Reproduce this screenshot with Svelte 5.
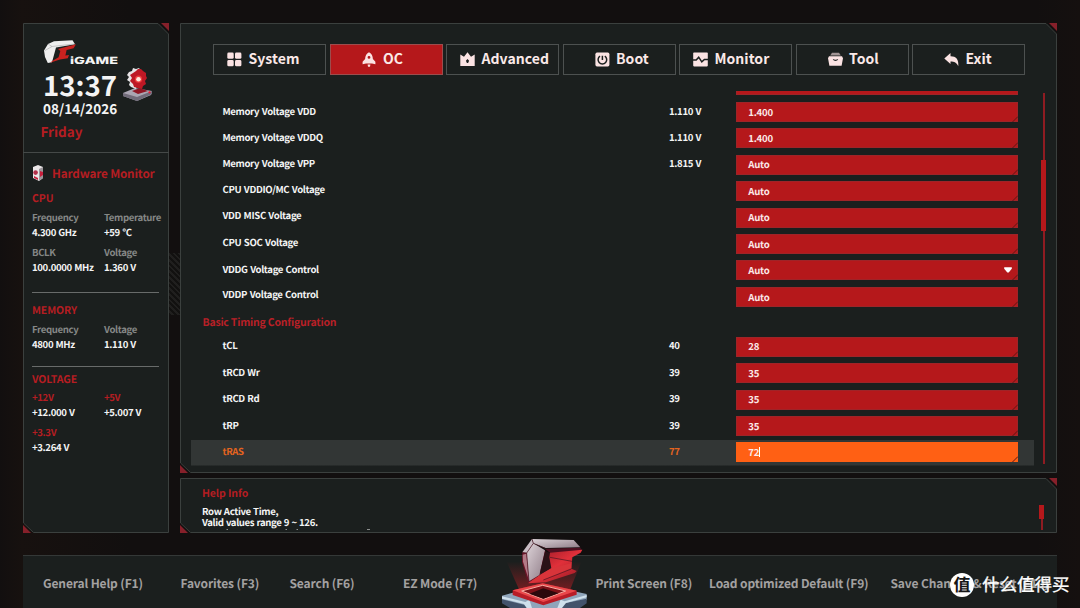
<script lang="ts">
	type Setting = {
		name: string;
		current?: string;
		value: string;
		select?: boolean;
		active?: boolean;
	};

	const tabs = [
		{ id: 'system', label: 'System', wide: true },
		{ id: 'oc', label: 'OC' },
		{ id: 'advanced', label: 'Advanced', wide: true },
		{ id: 'boot', label: 'Boot' },
		{ id: 'monitor', label: 'Monitor', wide: true },
		{ id: 'tool', label: 'Tool' },
		{ id: 'exit', label: 'Exit' },
	];

	let activeTab = $state('oc');

	const monitor = [
		{
			title: 'CPU',
			items: [
				['Frequency', '4.300 GHz'],
				['Temperature', '+59 °C'],
				['BCLK', '100.0000 MHz'],
				['Voltage', '1.360 V'],
			],
		},
		{
			title: 'MEMORY',
			items: [
				['Frequency', '4800 MHz'],
				['Voltage', '1.110 V'],
			],
		},
		{
			title: 'VOLTAGE',
			rails: true,
			items: [
				['+12V', '+12.000 V'],
				['+5V', '+5.007 V'],
				['+3.3V', '+3.264 V'],
			],
		},
	];

	const voltages: Setting[] = [
		{ name: 'Memory Voltage VDD', current: '1.110 V', value: '1.400' },
		{ name: 'Memory Voltage VDDQ', current: '1.110 V', value: '1.400' },
		{ name: 'Memory Voltage VPP', current: '1.815 V', value: 'Auto' },
		{ name: 'CPU VDDIO/MC Voltage', value: 'Auto' },
		{ name: 'VDD MISC Voltage', value: 'Auto' },
		{ name: 'CPU SOC Voltage', value: 'Auto' },
		{ name: 'VDDG Voltage Control', value: 'Auto', select: true },
		{ name: 'VDDP Voltage Control', value: 'Auto' },
	];

	const timings: Setting[] = [
		{ name: 'tCL', current: '40', value: '28' },
		{ name: 'tRCD Wr', current: '39', value: '35' },
		{ name: 'tRCD Rd', current: '39', value: '35' },
		{ name: 'tRP', current: '39', value: '35' },
		{ name: 'tRAS', current: '77', value: '72', active: true },
	];

	const shortcuts = [
		'General Help (F1)',
		'Favorites (F3)',
		'Search (F6)',
		'EZ Mode (F7)',
		'Print Screen (F8)',
		'Load optimized Default (F9)',
		'Save Changes & Reset (F10)',
	];
</script>

{#snippet frame(w: number, h: number)}
	<svg class="frame" viewBox="0 0 {w} {h}" width={w} height={h} aria-hidden="true">
		<path class="plate" d="M.5 .5H{w - 11}L{w - .5} 11V{h - .5}H10.5L.5 {h - 10}Z" />
		<path class="corner" d="M{w - 8} 0H{w}V8ZM0 {h - 8}V{h}H8Z" />
	</svg>
{/snippet}

{#snippet tabIcon(id: string)}
	<svg class="tab-icon" viewBox="0 0 15 15" width="15" height="15" aria-hidden="true">
		{#if id === 'system'}
			<rect x=".3" y=".5" width="6.4" height="6.3" rx="1.4" />
			<rect x="8" y=".5" width="6.4" height="6.3" rx="1.4" />
			<rect x=".3" y="8" width="6.4" height="6.3" rx="1.4" />
			<rect x="8" y="8" width="6.4" height="6.3" rx="1.4" />
		{:else if id === 'oc'}
			<path fill-rule="evenodd" d="M7 .2C9.8 1.8 10.8 4 10.9 7L13.4 9.7V12.3L10 11.6H4L.6 12.3V9.7L3.1 7C3.2 4 4.2 1.8 7 .2ZM7 4A1.4 1.4 0 1 0 7 6.8A1.4 1.4 0 0 0 7 4Z" />
			<path d="M5.6 12.4H8.4L8 14.4L7 15L6 14.4Z" />
		{:else if id === 'advanced'}
			<path fill-rule="evenodd" d="M.3 2.5L4 4.8L7.5 .3L11 4.8L14.7 2.5V14H.3ZM7.5 7L5.9 8.7L6.9 11H8.1L9.1 8.7Z" />
		{:else if id === 'boot'}
			<rect x=".4" y=".6" width="14" height="13.8" rx="1.6" />
			<path class="cut" d="M5 4.1A4.3 4.3 0 1 0 9.8 4.1M7.4 3.7V8" />
		{:else if id === 'monitor'}
			<rect x=".2" y=".6" width="14.6" height="13.8" rx=".8" />
			<path class="cut" d="M0 8H3.2L5.7 5.2L8.8 9.8L11.4 7.4H15" />
		{:else if id === 'tool'}
			<path opacity=".6" d="M4 .8H11L12.8 3.4H2.2Z" />
			<path fill-rule="evenodd" d="M1 4.2H14L15 6.3L13.6 13.7H1.4L0 6.3ZM4.8 7.2C6 9.5 9 9.5 10.2 7.2H9C8.2 8 6.8 8 6 7.2Z" />
		{:else}
			<path d="M.3 6.5L6.5 1V4.2C11.8 4.1 14.9 7 14.3 14.2C12.7 10.7 10.4 9.5 6.5 9.5V12Z" />
		{/if}
	</svg>
{/snippet}

{#snippet settingRow(row: Setting)}
	<div class="row" class:active={row.active} class:plain={!row.current && !row.select}>
		<span class="name">{row.name}</span>
		<span class="current">{row.current ?? ''}</span>
		<div class="field">
			<span class="value">{row.value}</span>
			{#if row.active}<span class="caret"></span>{/if}
			{#if row.select}
				<svg class="arrow" viewBox="0 0 8 6" width="8" height="6" aria-hidden="true">
					<path d="M.2 .3H7.8V1.8L4.7 5.4H3.3L.2 1.8Z" />
				</svg>
			{/if}
			<svg class="notch" viewBox="0 0 6 6" width="6" height="6" aria-hidden="true">
				<path d="M.5 6L6 .5" />
			</svg>
		</div>
	</div>
{/snippet}

<div class="screen">
	<div class="hatch"></div>

	<div class="body">
		<aside class="panel side">
			{@render frame(146, 510)}
			<header class="clock-box">
				<svg class="brand" viewBox="0 0 78 26" width="78" height="26" role="img" aria-label="iGame">
					<path fill="#eee" d="M5 4L11 1.2L29.5 .3L32 4.2L13 7.5L9 22.2L4.8 23L2 17L1 10.5Z" />
					<path fill="#c9221f" d="M15 9L33 4.2L30.6 8.3L23.6 9.9L22.4 15.6L26 15L24.8 18.3L17 19.5L7 22.7L9.6 20.7L15.6 17.2L17.3 11Z" />
					<path fill="none" stroke="#9b9b9b" stroke-width=".5" d="M5 4L9 6.5L2 10.5M9 6.5L31 4" />
					<text x="27" y="24" textLength="48" lengthAdjust="spacingAndGlyphs">iGAME</text>
				</svg>
				<div class="time">
					<span>13:37</span>
					<svg viewBox="0 0 31 34" width="31" height="34" aria-hidden="true">
						<path fill="#aaa5b2" d="M1 25L13 20L30 23L29 27L15 33L1 28Z" />
						<path fill="#716b79" d="M1 25L15 29L30 23V26L15 33L1 28Z" />
						<path fill="#901725" d="M10 23L18 20L26 23L16 26Z" />
						<path fill="#e7e4e6" d="M7 4L10 3L11 0L14 1L17 0L19 3L14 21L9 19L7 17L8 14L5 12L7 9L5 7Z" />
						<path fill="#be1825" d="M11 5L14 3L16 1L19 1L21 3L24 5V8L25 10L23 13L24 16L21 18L20 21L16 20L12 19L11 16L8 13L10 10L8 7Z" />
						<circle cx="16.5" cy="11.2" r="3.6" fill="#ed3b3e" />
						<circle cx="16.5" cy="11.2" r="2.3" fill="#ffe7db" />
						<circle cx="27.5" cy="24.3" r="1.1" fill="#f01832" />
					</svg>
				</div>
				<div class="date">08/14/2026</div>
				<div class="weekday">Friday</div>
			</header>

			<section class="monitor">
				<h2>
					<svg viewBox="0 0 12 18" width="12" height="18" aria-hidden="true">
						<path fill="#ebe7e8" d="M1 3L6 1L11 3V14L7 17L1 14Z" />
						<path fill="#9c969b" d="M7 5L11 3V14L7 17Z" />
						<circle cx="3.6" cy="8.6" r="2.3" fill="#b3304a" />
						<path fill="#c81f3c" d="M8 7L11 8V11L8 13ZM2 12L6 14V16L2 14Z" />
					</svg>
					Hardware Monitor
				</h2>
				{#each monitor as group}
					<div class="group" class:rails={group.rails}>
						<h3>{group.title}</h3>
						<dl>
							{#each group.items as [label, value]}
								<div>
									<dt>{label}</dt>
									<dd>{value}</dd>
								</div>
							{/each}
						</dl>
					</div>
				{/each}
			</section>
		</aside>

		<div class="right">
			<main class="panel main">
				{@render frame(877, 450)}
				<nav class="tabs">
					{#each tabs as tab}
						<button
							class="tab"
							class:selected={activeTab === tab.id}
							class:wide={tab.wide}
							onclick={() => (activeTab = tab.id)}
						>
							{@render tabIcon(tab.id)}
							<span>{tab.label}</span>
						</button>
					{/each}
				</nav>

				<div class="content">
					<div class="list">
						<div class="row scrolled"><div class="field"></div></div>
						{#each voltages as row}
							{@render settingRow(row)}
						{/each}
						<h2 class="section-title">Basic Timing Configuration</h2>
						{#each timings as row}
							{@render settingRow(row)}
						{/each}
					</div>
					<div class="scrollbar"><div class="thumb"></div></div>
				</div>
			</main>

			<section class="panel help">
				{@render frame(877, 55)}
				<div class="help-text">
					<h2>Help Info</h2>
					<p>Row Active Time,<br />Valid values range 9 ~ 126.</p>
					<!-- tops of the next line, cut off by the panel edge -->
					<svg class="cut-line" viewBox="0 0 170 2" width="170" height="2" aria-hidden="true">
						<path d="M24.5 .5H26M83.5 .5H85M94.5 .5H96M165 .5H168" />
					</svg>
				</div>
				<div class="scrollbar"><div class="thumb"></div></div>
			</section>
		</div>
	</div>

	<footer>
		{#each shortcuts as shortcut}
			<span>{shortcut}</span>
		{/each}
	</footer>

	<svg class="emblem" viewBox="60 48 270 216" width="90" height="72" aria-hidden="true">
		<defs>
			<linearGradient id="beam" x1="0" y1="1" x2="0" y2="0">
				<stop offset="0" stop-color="#a51c22" stop-opacity=".75" />
				<stop offset="1" stop-color="#a51c22" stop-opacity="0" />
			</linearGradient>
			<linearGradient id="steel" x1="0" y1="0" x2="1" y2="1">
				<stop offset="0" stop-color="#ddd3d8" />
				<stop offset="1" stop-color="#8f7c87" />
			</linearGradient>
			<linearGradient id="ruby" x1="0" y1="0" x2="1" y2="1">
				<stop offset="0" stop-color="#8e1623" />
				<stop offset=".5" stop-color="#e0303a" />
				<stop offset="1" stop-color="#8c1520" />
			</linearGradient>
		</defs>
		<path fill="url(#beam)" d="M80 125L304 125L270 210L188 225L118 210Z" />
		<path fill="#8fa5ba" d="M66 227L110 215L190 235L275 212L320 222V240L262 264H130L66 242Z" />
		<path fill="#43536b" d="M66 238L132 254L142 264H90L66 250ZM320 236L254 250L240 264H300L320 250Z" />
		<path fill="#cfe0ec" d="M66 229L136 246L148 239L156 264H140L132 252L66 236ZM320 225L254 244L242 239L232 264H246L258 249L320 232Z" />
		<path fill="#b91d27" d="M98 211L188 190L290 212V224L190 256L98 225Z" />
		<path fill="#e9474a" d="M98 211L188 190L290 212L190 246Z" />
		<path fill="#7e1118" stroke="#f7aaa0" stroke-width="3" d="M125 213L188 196L257 213L190 238Z" />
		<path fill="#2c090c" d="M148 221L190 205L236 220L190 236Z" />
		<path fill="#6d1428" d="M127 98L158 70L197 94L179 164L145 190L126 126Z" />
		<path fill="url(#steel)" d="M156 57L281 60L301 82L197 84L160 70Z" />
		<path fill="#c9bdc4" d="M156 57L127 97L141 99L160 70Z" />
		<path fill="url(#steel)" d="M160 70L195 91L178 165L147 184L140 99Z" />
		<path fill="#b27a87" d="M128 104L139 101L146 178L129 125Z" />
		<path fill="#4f0f20" d="M195 86L301 83L306 91L278 102L211 99Z" />
		<path fill="#2a1217" d="M195 94L210 98L214 145L184 162L180 158Z" />
		<path fill="url(#ruby)" d="M210 98L307 89L302 98L277 112L274 146L290 153L284 159L198 187L145 190L184 162L214 145L208 112Z" />
		<path fill="#d8343a" d="M145 189L214 145L274 130V144L190 180Z" />
		<path fill="none" stroke="#46131f" stroke-width="2" d="M156 57L160 70L196 85M160 70L140 99L127 98M140 99L147 185M210 112L276 124M190 180L274 147" />
	</svg>

	<div class="watermark">
		<span class="badge">值</span>
		<span>什么值得买</span>
	</div>
</div>

<style>
	:global(body) {
		background: #120f0f;
		overflow: hidden;
	}

	.screen {
		position: relative;
		box-sizing: border-box;
		width: 1080px;
		height: 608px;
		padding: 23px 23px 0;
		overflow: hidden;
		background: linear-gradient(90deg, #120f0f, #17110f 2%, #120f0f 12%, #120f0f 96%, #15100f);
		color: #f4f4f4;
		font-family: 'Noto Sans CJK SC', 'Noto Sans', sans-serif;
		font-size: 9.6px;
		font-weight: 700;
		text-rendering: geometricPrecision;
	}

	.hatch {
		position: absolute;
		left: 169px;
		top: 253px;
		width: 11px;
		height: 62px;
		background: repeating-linear-gradient(45deg, #121110 0 2px, #201f1e 2px 4px);
	}

	h2,
	h3,
	p,
	dl,
	dd {
		margin: 0;
		font-weight: 700;
	}

	.body {
		display: flex;
		gap: 11px;
		height: 510px;
	}

	.panel {
		position: relative;
		box-sizing: border-box;
	}

	.frame {
		position: absolute;
		inset: 0;
	}

	.plate {
		fill: #1b1f1e;
		stroke: #3b403e;
		stroke-width: 1;
	}

	.corner {
		fill: #86202a;
	}

	.panel > :not(.frame) {
		position: relative;
	}

	/* side panel */
	.side {
		width: 146px;
	}

	.clock-box {
		box-sizing: border-box;
		height: 130px;
		padding: 17px 0 0 20px;
		border-bottom: 1px solid #454948;
	}

	.brand {
		display: block;
	}

	.brand text {
		font-family: Inter, sans-serif;
		font-size: 10px;
		font-weight: 800;
		fill: #f4f4f4;
	}

	.time {
		display: flex;
		gap: 4.5px;
		height: 36px;
		line-height: 36px;
		font-size: 27.6px;
	}

	.time span {
		width: 74px;
	}

	.time svg {
		margin-top: 2px;
	}

	.date {
		font-size: 13.5px;
		line-height: 13px;
	}

	.weekday {
		margin: 7px 0 0 -2.5px;
		font-size: 13.5px;
		line-height: 18px;
		color: #b51d22;
	}

	.monitor {
		padding-left: 9px;
	}

	.monitor h2 {
		display: flex;
		align-items: center;
		gap: 8px;
		height: 40px;
		font-size: 11.7px;
		letter-spacing: -0.15px;
		color: #b51d22;
	}

	.group + .group {
		width: 127px;
		margin-top: 16.5px;
		padding-top: 12.5px;
		border-top: 1.5px solid #686b6a;
	}

	.group.rails.rails {
		margin-top: 14px;
		padding-top: 7px;
	}

	.group h3 {
		margin-bottom: 6px;
		font-size: 10.5px;
		letter-spacing: -0.1px;
		line-height: 11px;
		color: #b51d22;
	}

	.group.rails h3 {
		margin-bottom: 5px;
	}

	dl {
		display: grid;
		grid-template-columns: 72px 60px;
		row-gap: 5px;
		letter-spacing: -0.36px;
		line-height: 15px;
		white-space: nowrap;
		word-spacing: 0.5px;
	}

	dt {
		color: #858786;
	}

	.rails dt {
		color: #b51d22;
	}

	/* main panel */
	.right {
		display: flex;
		flex-direction: column;
		justify-content: space-between;
		width: 877px;
	}

	.main {
		height: 450px;
	}

	.tabs {
		display: flex;
		gap: 3.5px;
		padding: 20.5px 0 0 33px;
	}

	.tab {
		display: flex;
		align-items: center;
		gap: 6.5px;
		box-sizing: border-box;
		width: 113px;
		height: 31px;
		padding: 0 0 0 31px;
		border: 1px solid #4d5150;
		background: none;
		color: #fbe9e8;
		font: inherit;
		font-size: 14px;
	}

	.tab.wide {
		padding-left: 13px;
	}

	.tab.selected {
		border-color: #9c4d4d;
		background: #b5181b;
	}

	.tab span {
		margin-bottom: 3px;
		letter-spacing: 0.05px;
	}

	.tab-icon {
		fill: #fbe3e3;
	}

	.tab-icon .cut {
		fill: none;
		stroke: #1b1f1e;
		stroke-width: 1.5;
	}

	.content {
		display: flex;
		gap: 7px;
		padding: 16.5px 0 0 11px;
	}

	.list {
		width: 843px;
		height: 375px;
		overflow: hidden;
	}

	.row {
		display: grid;
		grid-template-columns: 478px 67.3px 281.4px;
		align-items: center;
		height: 26.45px;
		letter-spacing: -0.35px;
		word-spacing: 0.7px;
	}

	.row.scrolled {
		margin-top: -18.9px;
	}

	.scrolled .field {
		grid-column: 3;
	}

	.name {
		padding-left: 31.5px;
		margin-top: -2.5px;
	}

	.current {
		margin-top: -2.5px;
	}

	.plain .name {
		margin-top: -4.8px;
	}

	.row.active {
		background: linear-gradient(#323635, #323635) 0 1px / 100% 25.5px no-repeat;
	}

	.active .name,
	.active .current {
		color: #e4641f;
	}

	.field {
		position: relative;
		display: flex;
		align-items: center;
		box-sizing: border-box;
		height: 20px;
		padding: 0 5px 0 11px;
		border: 0.5px solid #9f2428;
		background: #b5181b;
		color: #fbe9e8;
		letter-spacing: -0.25px;
	}

	.value {
		margin-top: -0.5px;
	}

	.active .field {
		border-color: #ff6014;
		background: #ff6014;
	}

	.caret {
		width: 1px;
		height: 10px;
		background: #fff;
	}

	.arrow {
		margin-left: auto;
		fill: #fff;
	}

	.notch {
		position: absolute;
		right: -1px;
		bottom: -1px;
		stroke: #5c1717;
	}

	.section-title {
		height: 23.4px;
		padding-left: 11.5px;
		font-size: 10.5px;
		letter-spacing: -0.22px;
		line-height: 26.5px;
		color: #b92027;
	}

	.scrollbar {
		display: flex;
		justify-content: center;
		width: 5px;
		height: 371px;
		margin-top: 2px;
		background: linear-gradient(#8f1c22, #8f1c22) center / 2px 100% no-repeat;
	}

	.thumb {
		width: 5px;
		height: 71px;
		margin-top: 67px;
		background: #b5181b;
	}

	/* help panel */
	.help {
		display: flex;
		justify-content: space-between;
		height: 55px;
		padding: 10px 13px 0 22px;
	}

	.help h2 {
		font-size: 10.5px;
		letter-spacing: -0.1px;
		line-height: 11px;
		color: #b51d22;
	}

	.help p {
		margin-top: 6.5px;
		letter-spacing: -0.36px;
		line-height: 11px;
		word-spacing: 0.5px;
	}

	.cut-line {
		display: block;
		margin-top: 1.5px;
		stroke: #8d8f8e;
	}

	.help .scrollbar {
		height: 25px;
		margin-top: 17px;
	}

	.help .thumb {
		height: 14px;
		margin-top: 0;
	}

	footer {
		display: grid;
		grid-template-columns: 137.5px 109px 113.5px 192.5px 113.5px 181.5px auto;
		align-items: center;
		box-sizing: border-box;
		height: 53px;
		margin-top: 22px;
		padding: 3px 0 0 20px;
		border-top: 1px solid #343837;
		background: #1b1f1e;
		color: #a3a1a1;
		font-size: 12px;
		letter-spacing: -0.13px;
		white-space: nowrap;
	}

	.emblem {
		position: absolute;
		left: 500px;
		top: 536px;
	}

	.watermark {
		position: absolute;
		left: 950px;
		top: 572px;
		display: flex;
		align-items: center;
		gap: 8px;
		height: 25px;
		color: #fff;
		font-size: 17.5px;
		font-weight: 400;
		white-space: nowrap;
		-webkit-text-stroke: 0.3px #fff;
	}

	.badge {
		width: 24px;
		height: 24px;
		border-radius: 50%;
		background: #fff;
		color: #161616;
		font-size: 17px;
		font-weight: 700;
		line-height: 22px;
		text-align: center;
		-webkit-text-stroke: 0;
	}
</style>
